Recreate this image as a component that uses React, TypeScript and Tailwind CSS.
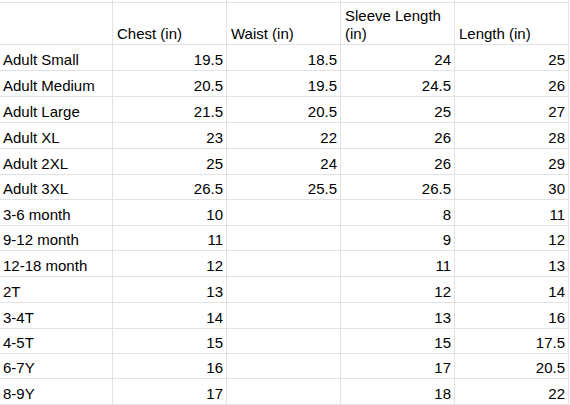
import React from "react";

const rows: { h: string; c: string[] }[] = [
  { h: "h-[26px]", c: ["Adult Small", "19.5", "18.5", "24", "25"] },
  { h: "h-[26px]", c: ["Adult Medium", "20.5", "19.5", "24.5", "26"] },
  { h: "h-[26px]", c: ["Adult Large", "21.5", "20.5", "25", "27"] },
  { h: "h-[26px]", c: ["Adult XL", "23", "22", "26", "28"] },
  { h: "h-[26px]", c: ["Adult 2XL", "25", "24", "26", "29"] },
  { h: "h-[25px]", c: ["Adult 3XL", "26.5", "25.5", "26.5", "30"] },
  { h: "h-[26px]", c: ["3-6 month", "10", "", "8", "11"] },
  { h: "h-[25px]", c: ["9-12 month", "11", "", "9", "12"] },
  { h: "h-[26px]", c: ["12-18 month", "12", "", "11", "13"] },
  { h: "h-[26px]", c: ["2T", "13", "", "12", "14"] },
  { h: "h-[26px]", c: ["3-4T", "14", "", "13", "16"] },
  { h: "h-[25px]", c: ["4-5T", "15", "", "15", "17.5"] },
  { h: "h-[25px]", c: ["6-7Y", "16", "", "17", "20.5"] },
  { h: "h-[26px]", c: ["8-9Y", "17", "", "18", "22"] },
];

const widths = ["w-[113px]", "w-[114px]", "w-[114px]", "w-[114px]", "w-[114px]"];
const headers = ["", "Chest (in)", "Waist (in)", "Sleeve Length (in)", "Length (in)"];

export default function App() {
  return (
    <div
      className="w-[570px] h-[405px] bg-white text-black overflow-hidden text-[15px] leading-[18px]"
      style={{ fontFamily: '"Liberation Sans", Arial, sans-serif' }}
    >
      <div className="flex h-[3px]">
        {widths.map((w, i) => (
          <div key={i} className={`${w} shrink-0 border-r border-b border-[#e2e2e2]`} />
        ))}
      </div>
      <div className="flex h-[42px]">
        {headers.map((t, i) => (
          <div
            key={i}
            className={`${widths[i]} shrink-0 border-r border-b border-[#e2e2e2] flex items-end pl-[4px] pr-[3px] pb-[1px]`}
          >
            <span>{t}</span>
          </div>
        ))}
      </div>
      {rows.map((r, ri) => (
        <div key={ri} className={`flex ${r.h}`}>
          {r.c.map((t, i) => (
            <div
              key={i}
              className={`${widths[i]} shrink-0 border-r border-b border-[#e2e2e2] flex items-end pb-[1px] ${
                i === 0 ? "pl-[3px] justify-start" : "pr-[3px] justify-end"
              } whitespace-nowrap`}
            >
              {t}
            </div>
          ))}
        </div>
      ))}
    </div>
  );
}
